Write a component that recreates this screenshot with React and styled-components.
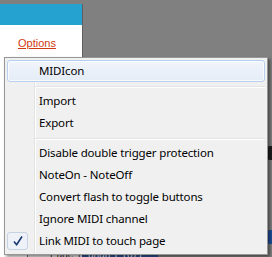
import React from "react";
import styled, { createGlobalStyle } from "styled-components";

const Global = createGlobalStyle`
  html, body { margin: 0; padding: 0; background: #808080; }
  body { width: 272px; height: 257px; overflow: hidden; }
`;

const Screen = styled.div`
  position: relative;
  width: 272px;
  height: 257px;
  overflow: hidden;
  background: #808080;
  display: flex;
  flex-direction: column;
`;

const Main = styled.div`
  display: flex;
  height: 249px;
`;

const LeftPanel = styled.div`
  width: 82px;
  margin-top: 4px;
  background: #ffffff;
  border-right: 1px solid #5f5f5f;
  display: flex;
  flex-direction: column;
`;

const Header = styled.div`
  height: 21px;
  background: #25a2d0;
`;

const OptionsLink = styled.a`
  margin: 12px 0 0 18px;
  font-family: "Liberation Sans", Arial, sans-serif;
  font-size: 11px;
  line-height: 13px;
  color: #d03a12;
  text-decoration: underline;
`;

const Workspace = styled.div`
  flex: 1;
  display: flex;
  flex-direction: column;
  align-items: flex-end;
  padding-top: 146px;
  gap: 70px;
`;

const Widget = styled.div`
  width: 5px;
  height: ${(p) => p.$h}px;
  background: ${(p) => p.$c};
  border-radius: 3px 0 0 3px;
`;

const BottomBar = styled.div`
  flex: 1;
  display: flex;
  font-family: "Liberation Sans", Arial, sans-serif;
  font-size: 10px;
  line-height: 10px;
  overflow: hidden;
`;

const Cell = styled.div`
  width: ${(p) => p.$w}px;
  background: ${(p) => p.$bg};
  color: ${(p) => p.$fg};
  padding: 1px 0 0 ${(p) => p.$pl || 0}px;
  box-sizing: border-box;
  white-space: nowrap;
  border-right: ${(p) => (p.$line ? "1px solid #6d6d6d" : "none")};
`;

const Menu = styled.div`
  position: absolute;
  left: 4px;
  top: 57px;
  width: 264px;
  box-sizing: border-box;
  padding: 2px;
  background: #f0f0f0;
  border: 1px solid #979797;
  box-shadow: 2px 2px 3px rgba(0, 0, 0, 0.45);
  font-family: "Noto Sans", "Segoe UI", sans-serif;
  font-size: 11.5px;
  letter-spacing: -0.15px;
  color: #000;
  &::before {
    content: "";
    position: absolute;
    left: 29px;
    top: 2px;
    bottom: 2px;
    width: 1px;
    background: #e2e3e3;
  }
  &::after {
    content: "";
    position: absolute;
    left: 30px;
    top: 2px;
    bottom: 2px;
    width: 1px;
    background: #ffffff;
  }
`;

const Item = styled.div`
  position: relative;
  z-index: 1;
  height: 22px;
  box-sizing: border-box;
  border-radius: 3px;
  border: 1px solid ${(p) => (p.$hot ? "#b8d0ef" : "transparent")};
  background: ${(p) =>
    p.$hot ? "linear-gradient(#f1f5fb, #e4ecf7)" : "transparent"};
  box-shadow: ${(p) => (p.$hot ? "inset 0 0 0 1px rgba(255,255,255,0.7)" : "none")};
  padding-left: 31px;
  line-height: 19px;
  white-space: nowrap;
`;

const CheckBox = styled.span`
  position: absolute;
  left: -1px;
  top: 1px;
  width: 21px;
  height: 18px;
  box-sizing: border-box;
  border: 1px solid #c6d3e3;
  border-radius: 3px;
  background: #eef2f8;
  display: flex;
  align-items: center;
  justify-content: center;
`;

const Separator = styled.div`
  position: relative;
  z-index: 1;
  height: 8px;
  margin-left: 28px;
  &::before {
    content: "";
    position: absolute;
    left: 0;
    right: 0;
    top: 4px;
    height: 1px;
    background: #e2e3e3;
  }
  &::after {
    content: "";
    position: absolute;
    left: 0;
    right: 0;
    top: 5px;
    height: 1px;
    background: #ffffff;
  }
`;

const Check = () => (
  <svg width="12" height="12" viewBox="0 0 12 12">
    <path
      d="M2 6.5 L4.6 9.8 L10 1.5"
      fill="none"
      stroke="#1c3a70"
      strokeWidth="1.6"
      strokeLinejoin="round"
    />
  </svg>
);

export default function App() {
  return (
    <Screen>
      <Global />
      <Main>
        <LeftPanel>
          <Header />
          <OptionsLink>Options</OptionsLink>
        </LeftPanel>
        <Workspace>
          <Widget $h={14} $c="#1e1e1e" />
          <Widget $h={14} $c="#1f4f9a" />
        </Workspace>
      </Main>
      <BottomBar>
        <Cell $w={28} $bg="#ffffff" $fg="#000" $line />
        <Cell $w={54} $bg="#e9e9e9" $fg="#333" $pl={22}>
          Page 1
        </Cell>
        <Cell $w={76} $bg="#2b4f8f" $fg="#fff" $pl={6}>
          unun:1 1677
        </Cell>
        <Cell $w={114} $bg="#808080" $fg="#fff" />
      </BottomBar>
      <Menu>
        <Item $hot>MIDIcon</Item>
        <Separator />
        <Item>Import</Item>
        <Item>Export</Item>
        <Separator />
        <Item>Disable double trigger protection</Item>
        <Item>NoteOn - NoteOff</Item>
        <Item>Convert flash to toggle buttons</Item>
        <Item>Ignore MIDI channel</Item>
        <Item>
          <CheckBox>
            <Check />
          </CheckBox>
          Link MIDI to touch page
        </Item>
      </Menu>
    </Screen>
  );
}
